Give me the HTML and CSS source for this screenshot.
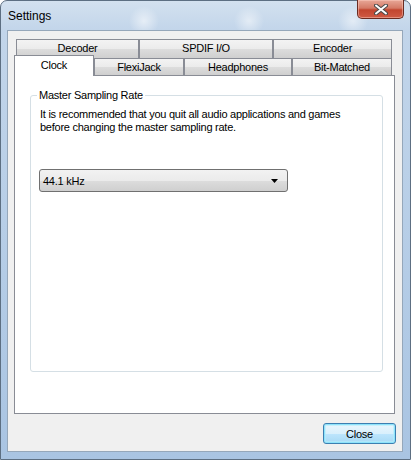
FILE: index.html
```html
<!DOCTYPE html>
<html lang="en">
<head>
  <meta charset="UTF-8" />
  <title>Settings</title>
  <link rel="stylesheet" href="styles.css">
</head>
<body>
  <div class="window">
    <div class="titlebar">
      <span class="title">Settings</span>
      <button class="close-x" aria-label="Close">
        <svg width="14" height="11" viewBox="0 0 14 11">
          <path d="M2 1.5 L12 9.5 M12 1.5 L2 9.5" stroke="#4a4a4a" stroke-width="4" stroke-linecap="round" />
          <path d="M2 1.5 L12 9.5 M12 1.5 L2 9.5" stroke="#ffffff" stroke-width="2" stroke-linecap="round" />
        </svg>
      </button>
    </div>

    <div class="client">
      <div class="tabs">
        <div class="tab-row back">
          <div class="tab w-decoder">Decoder</div>
          <div class="tab w-spdif">SPDIF I/O</div>
          <div class="tab w-encoder">Encoder</div>
        </div>
        <div class="tab-row front">
          <div class="tab selected w-clock">Clock</div>
          <div class="tab w-flexi">FlexiJack</div>
          <div class="tab w-head">Headphones</div>
          <div class="tab w-bit">Bit-Matched</div>
        </div>
      </div>

      <div class="panel">
        <fieldset class="group">
          <legend>Master Sampling Rate</legend>
          <p class="note">It is recommended that you quit all audio applications and games before changing the master sampling rate.</p>
          <div class="combo">
            <span>44.1 kHz</span>
            <svg width="7" height="4" viewBox="0 0 7 4"><path d="M0 0 H7 L3.5 4 Z" fill="#000" /></svg>
          </div>
        </fieldset>
      </div>

      <div class="footer">
        <button class="btn default">Close</button>
      </div>
    </div>
  </div>
</body>
</html>
```

FILE: styles.css
```css
* {
  box-sizing: border-box;
  margin: 0;
  padding: 0;
}

html, body {
  width: 411px;
  height: 460px;
  overflow: hidden;
  font-family: Tahoma, 'Liberation Sans', sans-serif;
  font-size: 11px;
  letter-spacing: -0.25px;
  color: #000;
  background: #fff;
}

.window {
  width: 411px;
  height: 460px;
  display: flex;
  flex-direction: column;
  border: 1px solid #5d6f82;
  border-radius: 7px 7px 0 0;
  background:
    radial-gradient(circle at 143px 20px, rgba(255,255,255,0.55), rgba(255,255,255,0) 15px),
    radial-gradient(circle at 248px 20px, rgba(255,255,255,0.5), rgba(255,255,255,0) 15px),
    radial-gradient(circle at 352px 20px, rgba(255,255,255,0.5), rgba(255,255,255,0) 15px),
    linear-gradient(to bottom, #d3e1ef, #c2d5ea 30px, #b4cce6 60%, #a9c4e2);
}

.titlebar {
  height: 29px;
  display: flex;
  justify-content: space-between;
  align-items: flex-start;
  padding-left: 7px;
  padding-right: 6px;
}

.title {
  font-family: 'Liberation Sans', sans-serif;
  font-size: 12px;
  letter-spacing: 0;
  line-height: 12px;
  margin-top: 9px;
}

.close-x {
  width: 47px;
  height: 19px;
  margin-top: -1px;
  border: 1px solid #6a2b21;
  border-top: none;
  border-radius: 0 0 5px 5px;
  background: linear-gradient(to bottom, #e8a797, #d47a66 45%, #c2452f 55%, #cf5a44);
  box-shadow: inset 0 0 0 1px rgba(255,210,200,0.45);
  display: flex;
  align-items: center;
  justify-content: center;
}

.client {
  flex: 1;
  margin: 0 7px 7px 6px;
  background: #f0f0f0;
  border: 1px solid #95a7ba;
  display: flex;
  flex-direction: column;
  padding: 8px 7px 0 6px;
}

.tabs {
  display: flex;
  flex-direction: column;
  padding: 0 3px 0 2px;
}

.tab-row {
  display: flex;
}

.tab-row.back {
  height: 19px;
}

.tab-row.front {
  height: 17px;
  align-items: flex-end;
}

.tab {
  height: 100%;
  border: 1px solid #898c95;
  border-bottom: none;
  background: linear-gradient(to bottom, #f3f3f3, #ebebeb 50%, #dddddd 50%, #cfcfcf);
  display: flex;
  align-items: center;
  justify-content: center;
  line-height: 13px;
}

.tab-row.back .tab {
  padding-bottom: 1px;
}

.tab.selected {
  height: 21px;
  margin-left: -2px;
  margin-bottom: -1px;
  background: #fff;
  position: relative;
  z-index: 1;
  padding-bottom: 1px;
}

.w-decoder { width: 123px; }
.w-spdif { width: 134px; }
.w-encoder { width: 119px; }
.w-clock { width: 80px; }
.w-flexi { width: 90px; }
.w-head { width: 108px; }
.w-bit { width: 100px; }

.panel {
  flex: 1;
  background: #fff;
  border: 1px solid #898c95;
  display: flex;
  flex-direction: column;
  padding: 13px 11px 41px 15px;
}

.group {
  flex: 1;
  border: 1px solid #d5dfe5;
  border-radius: 3px;
  padding: 0 6px;
  min-width: 0;
}

.group legend {
  padding: 0 2px;
  line-height: 13px;
}

.note {
  max-width: 315px;
  margin: 6px 0 0 3px;
  line-height: 13px;
}

.combo {
  width: 249px;
  height: 23px;
  margin: 35px 0 0 2px;
  border: 1px solid #707070;
  border-radius: 3px;
  background: linear-gradient(to bottom, #f2f2f2, #ebebeb 50%, #dddddd 50%, #cfcfcf);
  display: flex;
  align-items: center;
  justify-content: space-between;
  padding: 0 9px 0 3px;
}

.footer {
  display: flex;
  justify-content: flex-end;
  padding: 9px 0 7px 0;
  margin-right: -1px;
}

.btn {
  width: 73px;
  height: 21px;
  font-family: Tahoma, 'Liberation Sans', sans-serif;
  font-size: 11px;
  letter-spacing: -0.25px;
  color: #000;
  border: 1px solid #3c7fb1;
  border-radius: 3px;
  background: linear-gradient(to bottom, #eaf6fd, #d9f0fc 50%, #bee6fd 50%, #a7d9f5);
  cursor: pointer;
}

.btn.default {
  box-shadow: inset 0 0 0 1px #8ee3fb, inset 0 0 0 2px rgba(180,236,252,0.6);
}
```
